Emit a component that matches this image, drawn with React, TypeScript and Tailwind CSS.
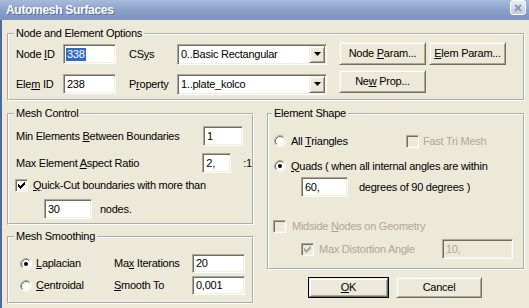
import React from "react";

const sunken =
  "border border-t-[#aca899] border-l-[#aca899] border-b-white border-r-white shadow-[inset_1px_1px_0_#716f64,inset_-1px_-1px_0_#f1efe2]";
const raised =
  "border border-t-[#f1efe2] border-l-[#f1efe2] border-b-[#716f64] border-r-[#716f64] shadow-[inset_1px_1px_0_#fff,inset_-1px_-1px_0_#aca899]";

const TextBox: React.FC<{ className: string; value: string; selected?: boolean; disabled?: boolean }> = ({
  className,
  value,
  selected,
  disabled,
}) => (
  <div
    className={`flex items-center shrink-0 pl-[2px] ${sunken} ${
      disabled ? "bg-[#ece9d8] text-[#aca899]" : "bg-white"
    } ${className}`}>
    <span className={selected ? "bg-[#316ac5] text-white px-[1px]" : "px-[1px]"}>{value}</span>
  </div>
);

const Combo: React.FC<{ value: string }> = ({ value }) => (
  <div className={`flex items-center justify-between w-[150px] h-[21px] bg-white pl-[2px] pr-[1px] ${sunken}`}>
    <span className="px-[1px]">{value}</span>
    <div className={`w-[16px] h-[17px] flex items-center justify-center bg-[#ece9d8] ${raised}`}>
      <svg width="7" height="4" viewBox="0 0 7 4">
        <polygon points="0,0 7,0 3.5,4" fill="#000" />
      </svg>
    </div>
  </div>
);

const Btn: React.FC<{ className: string; children: React.ReactNode }> = ({ className, children }) => (
  <div className={`flex items-center justify-center bg-[#ece9d8] ${raised} ${className}`}>
    <span>{children}</span>
  </div>
);

// classic 7x7 check mark
const checkPixels = [
  [6, 0], [5, 1], [6, 1], [0, 2], [4, 2], [5, 2], [6, 2], [0, 3], [1, 3], [3, 3], [4, 3], [5, 3],
  [0, 4], [1, 4], [2, 4], [3, 4], [4, 4], [1, 5], [2, 5], [3, 5], [2, 6],
];

const CheckBox: React.FC<{ checked?: boolean; disabled?: boolean }> = ({ checked, disabled }) => (
  <div
    className={`w-[13px] h-[13px] shrink-0 flex items-center justify-center ${sunken} ${
      disabled ? "bg-[#ece9d8]" : "bg-white"
    }`}>
    {checked && (
      <svg width="7" height="7" viewBox="0 0 7 7" shapeRendering="crispEdges">
        {checkPixels.map(([x, y], i) => (
          <rect key={i} x={x} y={y} width="1" height="1" fill={disabled ? "#aca899" : "#000"} />
        ))}
      </svg>
    )}
  </div>
);

const Radio: React.FC<{ checked?: boolean }> = ({ checked }) => (
  <svg width="12" height="12" viewBox="0 0 12 12" className="shrink-0">
    <circle cx="6" cy="6" r="4.5" fill="#fff" />
    <path d="M2.11 9.89 A5.5 5.5 0 0 1 9.89 2.11" stroke="#aca899" fill="none" />
    <path d="M9.89 2.11 A5.5 5.5 0 0 1 2.11 9.89" stroke="#fff" fill="none" />
    <path d="M2.82 9.18 A4.5 4.5 0 0 1 9.18 2.82" stroke="#716f64" fill="none" />
    <path d="M9.18 2.82 A4.5 4.5 0 0 1 2.82 9.18" stroke="#f1efe2" fill="none" />
    {checked && <circle cx="6" cy="6" r="2" fill="#000" />}
  </svg>
);

const Group: React.FC<{ title: string; className: string; legendClass: string; children: React.ReactNode }> = ({
  title,
  className,
  legendClass,
  children,
}) => (
  <fieldset className={`border-2 border-white [border-style:groove] min-w-0 shrink-0 ${className}`}>
    <legend className={`px-[2px] leading-[13px] ${legendClass}`}>{title}</legend>
    {children}
  </fieldset>
);

export default function App() {
  return (
    <div className="w-[529px] h-[308px] overflow-hidden flex flex-col bg-[#ece9d8] text-black text-[11px] leading-[13px] tracking-[-0.25px] font-['Liberation_Sans',Arial,sans-serif]">
      {/* title bar */}
      <div className="h-[20px] shrink-0 flex items-start justify-between pl-[6px] pr-[3px] bg-gradient-to-b from-[#a9bbdc] via-[#8aa1c9] to-[#7b93c0]">
        <span className="self-center font-bold text-white text-[12px] tracking-[-0.3px] [text-shadow:1px_1px_0_#5b6f99]">
          Automesh Surfaces
        </span>
        <div className="w-[16px] h-[15px] rounded-[3px] border border-white bg-gradient-to-b from-[#e8edf5] to-[#c3cddd] flex items-center justify-center">
          <svg width="8" height="8" viewBox="0 0 8 8">
            <path d="M1 1 L7 7 M7 1 L1 7" stroke="#8b96a8" strokeWidth="1.8" />
          </svg>
        </div>
      </div>

      <div className="flex-1 flex flex-col border-l-2 border-[#4b6aa3] pl-[5px]">
        <Group title="Node and Element Options" className="w-[518px] h-[74px] mt-[7px]" legendClass="ml-[5px]">
          <div className="flex items-start pl-[7px] pt-[2px]">
            <div className="flex flex-col gap-[8px] mt-[1px]">
              <div className="flex items-center h-[22px]">
                <span className="w-[47px]">
                  Node <u>I</u>D
                </span>
                <TextBox className="w-[53px] h-[20px]" value="338" selected />
                <span className="w-[48px] ml-[13px]">
                  CS<u>y</u>s
                </span>
                <Combo value="0..Basic Rectangular" />
              </div>
              <div className="flex items-center h-[22px]">
                <span className="w-[47px]">
                  Ele<u>m</u> ID
                </span>
                <TextBox className="w-[53px] h-[20px]" value="238" />
                <span className="w-[48px] ml-[13px]">
                  P<u>r</u>operty
                </span>
                <Combo value="1..plate_kolco" />
              </div>
            </div>
            <div className="flex flex-col gap-[5px] ml-[12px]">
              <div className="flex gap-[3px]">
                <Btn className="w-[87px] h-[23px]">
                  Node <u>P</u>aram...
                </Btn>
                <Btn className="w-[77px] h-[23px]">
                  <u>E</u>lem Param...
                </Btn>
              </div>
              <Btn className="w-[87px] h-[23px]">
                Ne<u>w</u> Prop...
              </Btn>
            </div>
          </div>
        </Group>

        <div className="flex gap-[13px] mt-[6px]">
          {/* left column */}
          <div className="w-[247px] flex flex-col">
            <Group title="Mesh Control" className="w-[247px] h-[118px]" legendClass="ml-[5px]">
              <div className="flex flex-col pl-[7px]">
                <div className="flex items-center h-[20px] mt-[6px]">
                  <span className="w-[187px]">
                    Min Elements <u>B</u>etween Boundaries
                  </span>
                  <TextBox className="w-[40px] h-[20px]" value="1" />
                </div>
                <div className="flex items-center h-[20px] mt-[7px]">
                  <span className="w-[187px]">
                    Max Element <u>A</u>spect Ratio
                  </span>
                  <TextBox className="w-[29px] h-[20px]" value="2," />
                  <span className="ml-[12px]">:1</span>
                </div>
                <div className="flex items-center h-[13px] mt-[6px] -ml-[1px]">
                  <CheckBox checked />
                  <span className="ml-[5px]">
                    <u>Q</u>uick-Cut boundaries with more than
                  </span>
                </div>
                <div className="flex items-center h-[20px] mt-[7px] pl-[28px]">
                  <TextBox className="w-[48px] h-[20px]" value="30" />
                  <span className="ml-[8px]">nodes.</span>
                </div>
              </div>
            </Group>

            <Group title="Mesh Smoothing" className="w-[247px] h-[74px] mt-[5px]" legendClass="ml-[5px]">
              <div className="flex flex-col pl-[11px] mt-[11px] gap-[3px]">
                <div className="flex items-center h-[19px]">
                  <Radio checked />
                  <span className="ml-[4px] w-[78px]">
                    <u>L</u>aplacian
                  </span>
                  <span className="w-[78px]">
                    Ma<u>x</u> Iterations
                  </span>
                  <TextBox className="w-[53px] h-[19px]" value="20" />
                </div>
                <div className="flex items-center h-[19px]">
                  <Radio />
                  <span className="ml-[4px] w-[78px]">
                    <u>C</u>entroidal
                  </span>
                  <span className="w-[78px]">
                    <u>S</u>mooth To
                  </span>
                  <TextBox className="w-[53px] h-[19px]" value="0,001" />
                </div>
              </div>
            </Group>
          </div>

          {/* right column */}
          <div className="w-[258px] flex flex-col">
            <Group title="Element Shape" className="w-[258px] h-[163px]" legendClass="ml-[3px]">
              <div className="flex flex-col">
                <div className="flex items-center h-[14px] mt-[14px] pl-[5px]">
                  <Radio />
                  <span className="ml-[5px] w-[115px]">
                    All <u>T</u>riangles
                  </span>
                  <CheckBox disabled />
                  <span className="ml-[4px] text-[#aca899]">Fast Tri Mesh</span>
                </div>
                <div className="flex items-center h-[14px] mt-[11px] pl-[5px]">
                  <Radio checked />
                  <span className="ml-[5px]">
                    <u>Q</u>uads ( when all internal angles are within
                  </span>
                </div>
                <div className="flex items-center h-[20px] mt-[4px] pl-[32px]">
                  <TextBox className="w-[47px] h-[20px]" value="60," />
                  <span className="ml-[11px]">degrees of 90 degrees )</span>
                </div>
                <div className="flex items-center h-[13px] mt-[23px] pl-[4px]">
                  <CheckBox disabled />
                  <span className="ml-[6px] text-[#aca899]">
                    Midside <u>N</u>odes on Geometry
                  </span>
                </div>
                <div className="flex items-center h-[20px] mt-[6px] pl-[32px]">
                  <CheckBox checked disabled />
                  <span className="ml-[5px] w-[123px] text-[#aca899]">Max Distortion Angle</span>
                  <TextBox className="w-[71px] h-[20px]" value="10," disabled />
                </div>
              </div>
            </Group>

            <div className="flex gap-[7px] mt-[7px] pl-[41px]">
              <div className="w-[81px] h-[21px] border border-black flex">
                <Btn className="flex-1">
                  <u>O</u>K
                </Btn>
              </div>
              <Btn className="w-[86px] h-[21px]">Cancel</Btn>
            </div>
          </div>
        </div>
      </div>
    </div>
  );
}
